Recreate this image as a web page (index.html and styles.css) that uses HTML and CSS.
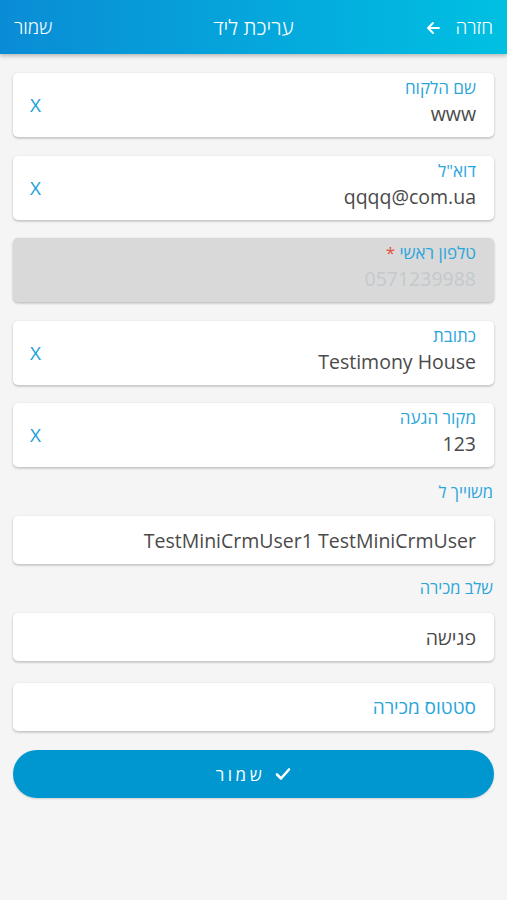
FILE: index.html
```html
<!DOCTYPE html>
<html lang="he" dir="rtl">
<head>
<meta charset="utf-8">
<title>עריכת ליד</title>
<link rel="stylesheet" href="styles.css">
</head>
<body>
<header class="topbar">
  <div class="back"><span>חזרה</span><svg class="arrow" width="14" height="14" viewBox="0 0 14 14"><path d="M13 7H2M7 2L2 7l5 5" fill="none" stroke="#fff" stroke-width="1.8" stroke-linecap="round" stroke-linejoin="round"/></svg></div>
  <div class="title">עריכת ליד</div>
  <div class="save-top">שמור</div>
</header>
<main class="form">
  <div class="card field">
    <div class="field-body">
      <div class="label">שם הלקוח</div>
      <div class="value">www</div>
    </div>
    <span class="clear">X</span>
  </div>
  <div class="card field">
    <div class="field-body">
      <div class="label">דוא"ל</div>
      <div class="value">qqqq@com.ua</div>
    </div>
    <span class="clear">X</span>
  </div>
  <div class="card field disabled">
    <div class="field-body">
      <div class="label">טלפון ראשי <span class="req">*</span></div>
      <div class="value">0571239988</div>
    </div>
  </div>
  <div class="card field">
    <div class="field-body">
      <div class="label">כתובת</div>
      <div class="value">Testimony House</div>
    </div>
    <span class="clear">X</span>
  </div>
  <div class="card field">
    <div class="field-body">
      <div class="label">מקור הגעה</div>
      <div class="value">123</div>
    </div>
    <span class="clear">X</span>
  </div>
  <div class="section-label first">משוייך ל</div>
  <div class="card select"><span class="value">TestMiniCrmUser1 TestMiniCrmUser</span></div>
  <div class="section-label">שלב מכירה</div>
  <div class="card select"><span class="value">פגישה</span></div>
  <div class="card select status"><span class="placeholder">סטטוס מכירה</span></div>
  <button class="save-btn"><svg width="16" height="14" viewBox="0 0 16 14"><path d="M2 7.5l4 4 8-9" fill="none" stroke="#fff" stroke-width="2.6" stroke-linecap="round" stroke-linejoin="round"/></svg><span>שמור</span></button>
</main>
</body>
</html>
```
FILE: styles.css
```css
* { box-sizing: border-box; }
html, body { margin: 0; padding: 0; }
body {
  background: #f5f5f5;
  font-family: "Open Sans", "DejaVu Sans", sans-serif;
  width: 507px;
  height: 900px;
  overflow: hidden;
}
.topbar {
  height: 54px;
  background: linear-gradient(to left, #00c0e2, #0a8cd5);
  box-shadow: 0 2px 4px rgba(0,0,0,0.25);
  color: #fff;
  display: flex;
  align-items: center;
  justify-content: space-between;
  padding: 0 14px;
  font-size: 19px;
  font-weight: 300;
  position: relative;
}
.back { display: flex; align-items: center; gap: 15px; }
.arrow { margin-top: 1px; }
.title {
  position: absolute;
  left: 0;
  right: 0;
  text-align: center;
  font-size: 21px;
  pointer-events: none;
}
.form {
  display: flex;
  flex-direction: column;
  padding: 19px 13px 0 13px;
}
.card {
  background: #fff;
  border-radius: 5px;
  box-shadow: 0 1px 3px rgba(0,0,0,0.2), 0 2px 2px rgba(0,0,0,0.06);
}
.field {
  height: 64px;
  margin-bottom: 18.5px;
  display: flex;
  align-items: flex-start;
  padding: 4px 18px 0 17px;
}
.field-body { flex: 1; }
.label {
  color: #2aa6db;
  font-size: 17px;
  line-height: 22px;
}
.req { color: #e2503c; }
.field .value {
  color: #4a4a4a;
  font-size: 19.5px;
  line-height: 28px;
  margin-top: 1px;
}
.clear {
  align-self: center;
  margin-top: -4px;
  color: #1a9fd8;
  font-size: 19px;
  line-height: 24px;
}
.disabled { background: #d9d9d9; }
.disabled .value { color: #c3c9cd; }
.section-label {
  color: #2aa6db;
  font-size: 16.5px;
  line-height: 22px;
  padding-right: 1px;
  height: 49px;
  padding-top: 13px;
}
.section-label.first { height: 49px; padding-top: 14px; margin-top: -18.5px; }
.select {
  height: 48px;
  display: flex;
  align-items: center;
  padding: 0 18px;
  font-size: 19.5px;
}
.select .value { color: #4a4a4a; }
.status { margin-top: 22px; }
.placeholder { color: #2aa6db; font-size: 19px; }
.save-btn {
  margin-top: 19px;
  height: 48px;
  border: none;
  border-radius: 24px;
  background: #0096d0;
  color: #fff;
  font-family: inherit;
  font-size: 17px;
  letter-spacing: 3.5px;
  display: flex;
  align-items: center;
  justify-content: center;
  gap: 10px;
  box-shadow: 0 1px 2px rgba(0,0,0,0.15);
}
```
